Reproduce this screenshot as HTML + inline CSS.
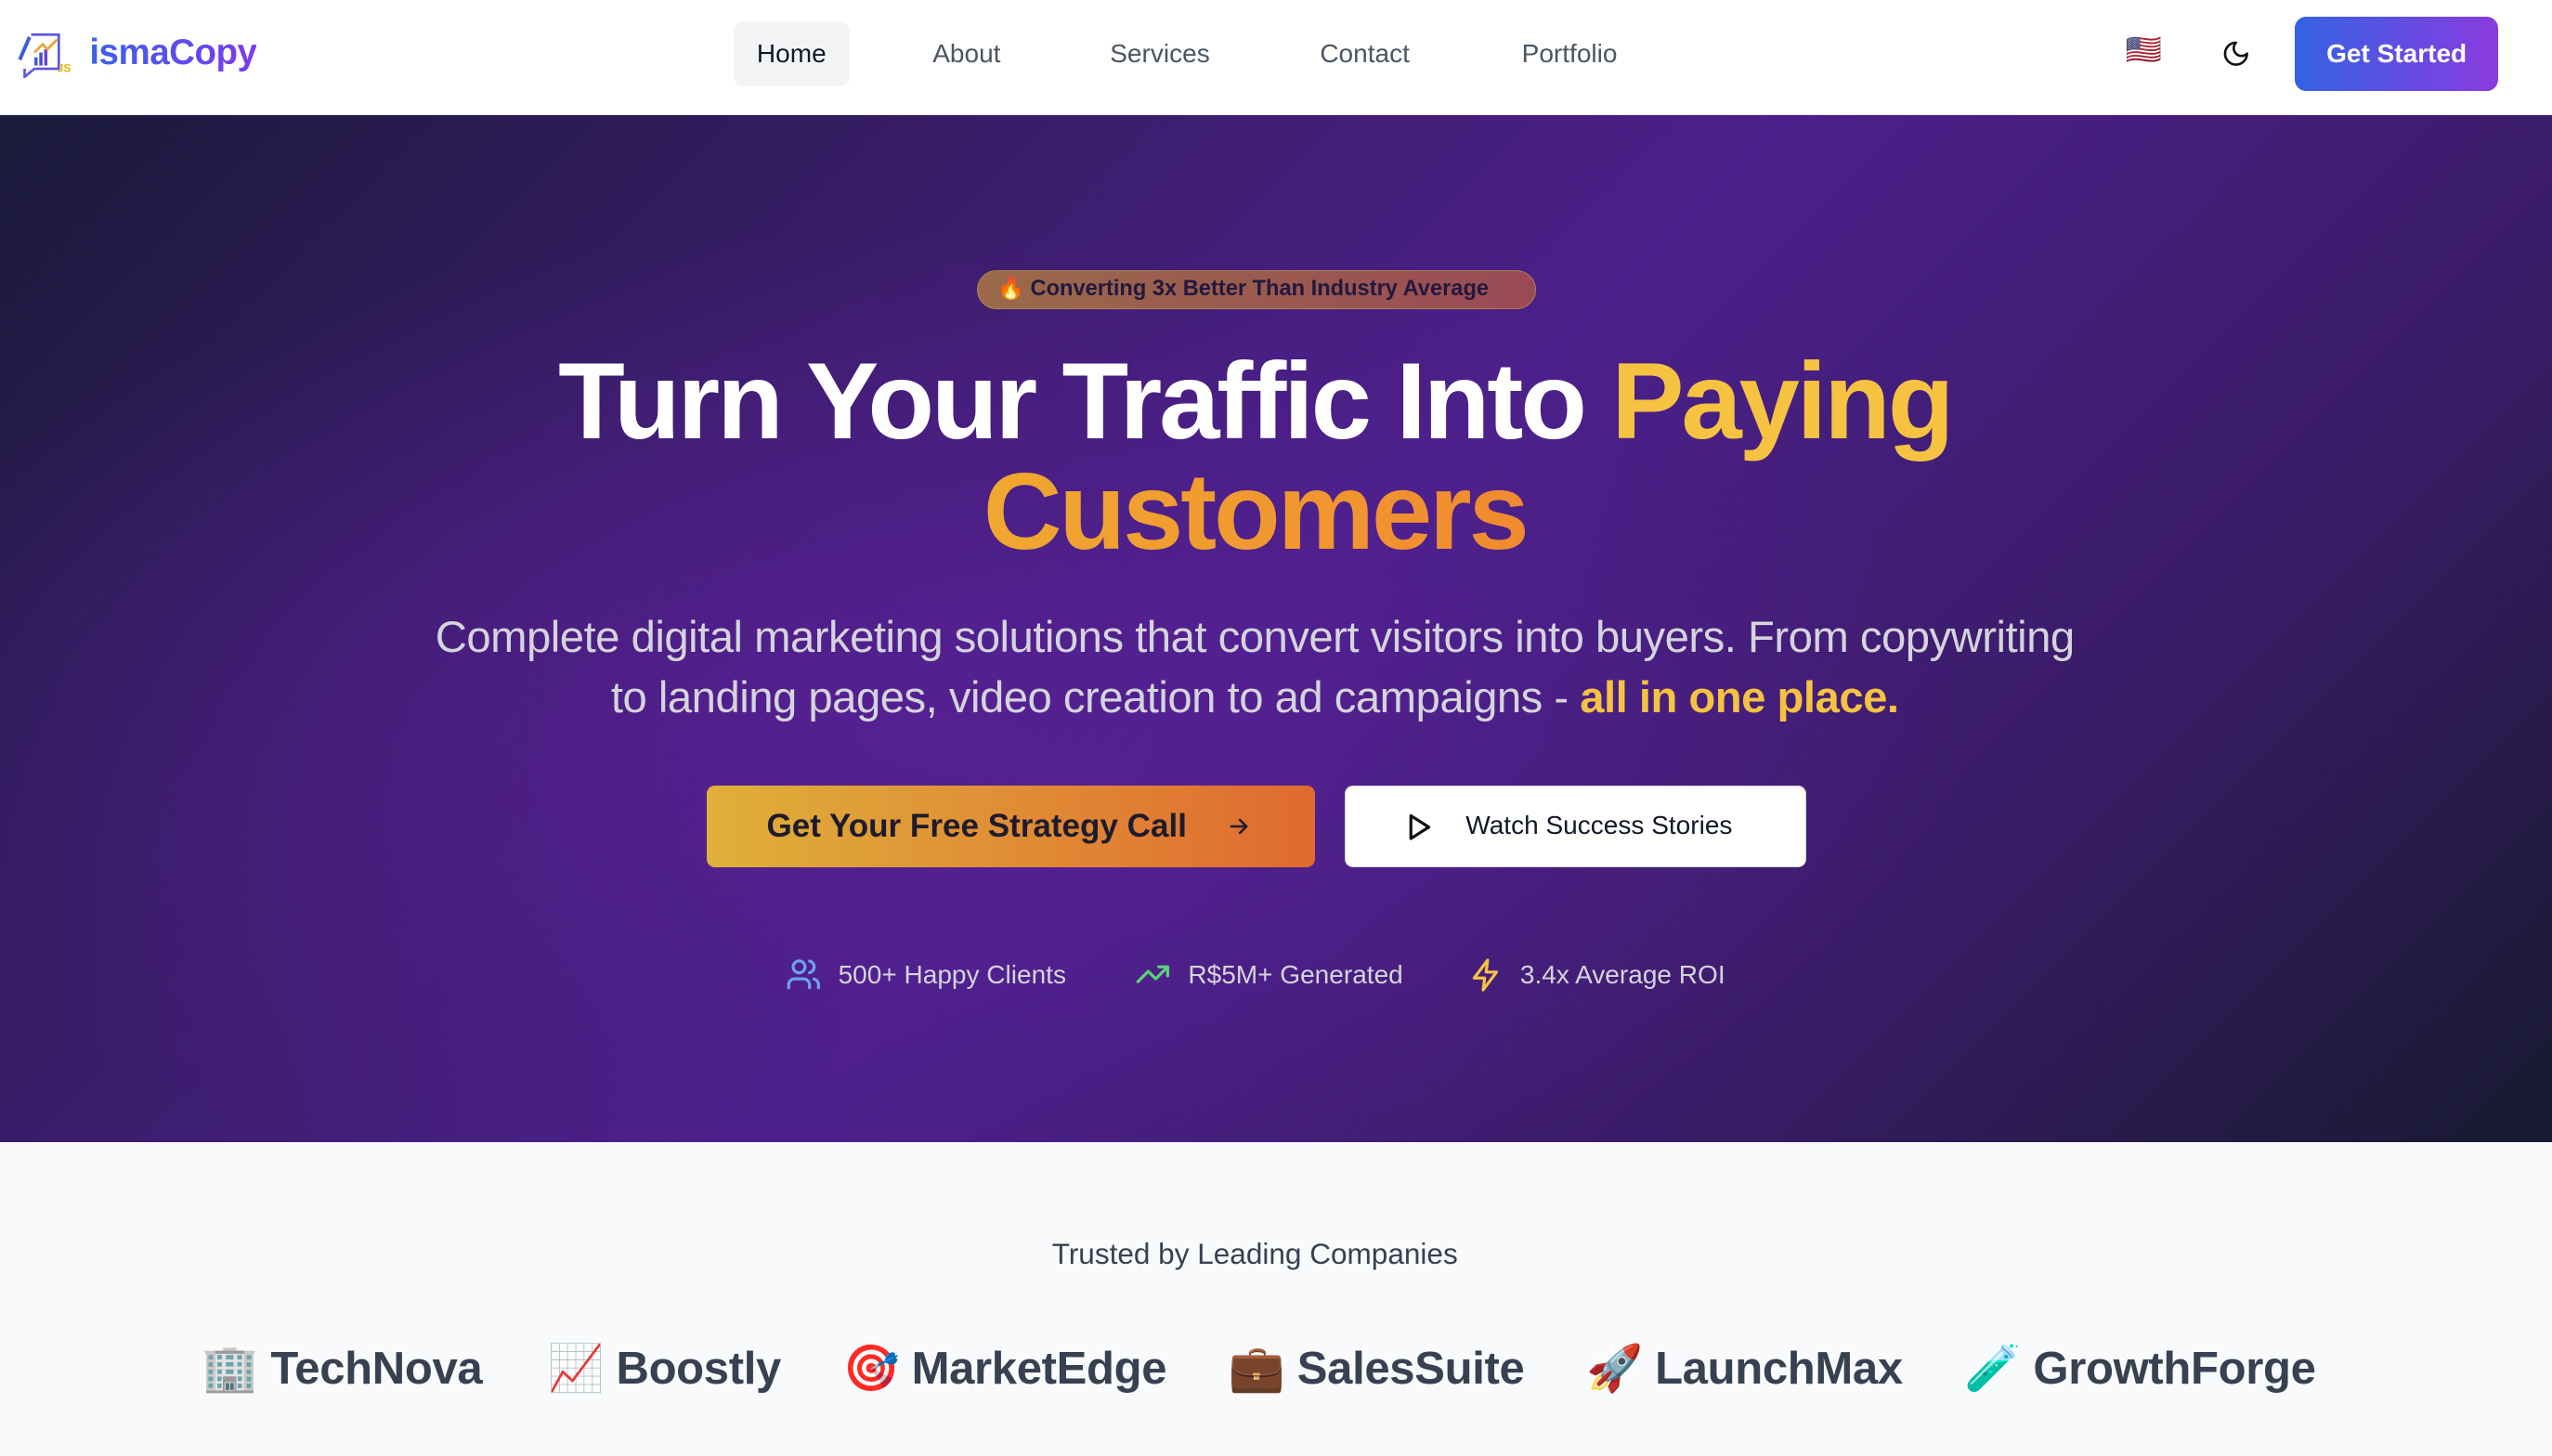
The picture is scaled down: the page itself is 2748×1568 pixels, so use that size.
<!DOCTYPE html>
<html><head><meta charset="utf-8">
<style>
*{margin:0;padding:0;box-sizing:border-box}
html,body{width:2748px;height:1568px;overflow:hidden}
body{font-family:"Liberation Sans","DejaVu Sans",sans-serif;background:#f8fafc}
#w{width:1568px;height:895px;position:relative;zoom:1.75255}
.nav{position:absolute;left:0;top:0;width:1568px;height:71px;background:#fff;border-bottom:1px solid #e5e7eb}
.a{position:absolute;white-space:nowrap}
.link{font-size:16px;color:#4b5563;top:24px}
.hero{position:absolute;left:0;top:71px;width:1568px;height:631px;
background:radial-gradient(ellipse 60% 70% at 35% 60%,rgba(88,32,150,.85),rgba(88,32,150,0) 70%),
linear-gradient(135deg,#1a1a3a 0%,#3b1d6b 30%,#4b208a 50%,#3a1c68 75%,#171a30 100%)}
.c{left:0;width:1542px;text-align:center}
</style></head><body><div id="w">
<div class="nav">
 <svg class="a" style="left:9px;top:18px" width="38" height="30" viewBox="0 0 38 30">
  <path d="M8 4 L2 18 L4 19 L10 5Z" fill="#3b5bdb"/>
  <path d="M10 3 H27 V24 H12 L6 29 V24" fill="none" stroke="#5a55e0" stroke-width="1.5"/>
  <rect x="12" y="17" width="2" height="5" fill="#3b5bdb"/><rect x="15" y="14" width="2" height="8" fill="#5548d8"/><rect x="18" y="12" width="2" height="10" fill="#6a44d8"/>
  <path d="M12 14 L17 9 L20 12 L26 6" fill="none" stroke="#e8a53a" stroke-width="1.6"/>
  <text x="26" y="26" font-size="7" font-weight="bold" fill="#eab308">JS</text>
 </svg>
 <div class="a" style="left:55px;top:20px;font-size:22px;font-weight:bold;letter-spacing:-.3px;background:linear-gradient(90deg,#3b63e6,#7c3aed);-webkit-background-clip:text;color:transparent">ismaCopy</div>
 <div class="a" style="left:451px;top:13px;width:71px;height:40px;background:#f3f4f6;border-radius:6px"></div>
 <div class="a link" style="left:465px;color:#111827">Home</div>
 <div class="a link" style="left:573px">About</div>
 <div class="a link" style="left:682px">Services</div>
 <div class="a link" style="left:811px">Contact</div>
 <div class="a link" style="left:935px">Portfolio</div>
 <div class="a" style="left:1306px;top:20px;font-size:18px">🇺🇸</div>
 <svg class="a" style="left:1365px;top:24px" width="18" height="18" viewBox="0 0 24 24"><path d="M12 3a6 6 0 0 0 9 9 9 9 0 1 1-9-9Z" fill="none" stroke="#111" stroke-width="2" stroke-linecap="round" stroke-linejoin="round"/></svg>
 <div class="a" style="left:1410px;top:10px;width:125px;height:46px;border-radius:7px;background:linear-gradient(90deg,#3362e3,#8a3be0);color:#fff;font-size:16px;font-weight:bold;text-align:center;line-height:46px">Get Started</div>
</div>
<div class="hero"></div>
<div class="a" style="left:600px;top:166px;width:344px;height:24px;border-radius:12px;background:linear-gradient(90deg,#9a6a4a,#9a4a55);border:1px solid #b08050;font-size:13.5px;font-weight:bold;color:#22183f;line-height:22px;padding-left:12px">🔥 Converting 3x Better Than Industry Average</div>
<div class="a c" style="top:212px;font-size:67px;font-weight:bold;color:#fff;letter-spacing:-1.8px;line-height:68px">Turn Your Traffic Into <span style="color:#f5c242">Paying</span><br><span style="background:linear-gradient(90deg,#f0a830,#f08a30);-webkit-background-clip:text;color:transparent">Customers</span></div>
<div class="a c" style="top:374px;font-size:27px;color:#d4d4dc;line-height:37px;letter-spacing:-.3px">Complete digital marketing solutions that convert visitors into buyers. From copywriting<br>to landing pages, video creation to ad campaigns - <b style="color:#f5c242">all in one place.</b></div>
<div class="a" style="left:434px;top:483px;width:374px;height:50px;border-radius:5px;background:linear-gradient(90deg,#dfb03a,#e06a30);color:#1e1b2e;font-size:20px;font-weight:bold;line-height:50px;padding-left:37px">Get Your Free Strategy Call</div>
<svg class="a" style="left:753px;top:500px" width="16" height="16" viewBox="0 0 24 24" fill="none" stroke="#1e1b2e" stroke-width="2.2" stroke-linecap="round" stroke-linejoin="round"><path d="M5 12h14M13 6l6 6-6 6"/></svg>
<div class="a" style="left:826px;top:483px;width:284px;height:50px;border-radius:5px;background:#fff;border:1px solid #d1d5db;color:#111827;font-size:16px;line-height:48px;padding-left:74px">Watch Success Stories</div>
<svg class="a" style="left:864px;top:499px" width="16" height="18" viewBox="0 0 16 18"><path d="M3 2 L14 9 L3 16Z" fill="none" stroke="#111" stroke-width="1.8" stroke-linejoin="round"/></svg>
<svg class="a" style="left:483px;top:588px" width="22" height="22" viewBox="0 0 24 24" fill="none" stroke="#6ea0f5" stroke-width="2" stroke-linecap="round"><circle cx="9" cy="7" r="4"/><path d="M2 21v-2a4 4 0 0 1 4-4h6a4 4 0 0 1 4 4v2M16 3.1a4 4 0 0 1 0 7.8M22 21v-2a4 4 0 0 0-3-3.9"/></svg>
<div class="a" style="left:515px;top:590px;font-size:16px;color:#d4d4dc">500+ Happy Clients</div>
<svg class="a" style="left:697px;top:588px" width="22" height="22" viewBox="0 0 24 24" fill="none" stroke="#5ad27a" stroke-width="2" stroke-linecap="round" stroke-linejoin="round"><path d="M2 17l7-7 5 5 8-8M16 7h6v6"/></svg>
<div class="a" style="left:730px;top:590px;font-size:16px;color:#d4d4dc">R$5M+ Generated</div>
<svg class="a" style="left:902px;top:587px" width="22" height="24" viewBox="0 0 24 24" fill="none" stroke="#f5c242" stroke-width="2" stroke-linejoin="round"><path d="M13 2L4 14h7l-1 8 9-12h-7z"/></svg>
<div class="a" style="left:934px;top:590px;font-size:16px;color:#d4d4dc">3.4x Average ROI</div>
<div class="a c" style="top:760px;font-size:18px;color:#374151">Trusted by Leading Companies</div>
<div class="a" style="left:124px;top:824px;font-size:28px;font-weight:bold;color:#374151;letter-spacing:-.2px">
<span>🏢 TechNova</span><span style="margin-left:40px">📈 Boostly</span><span style="margin-left:38px">🎯 MarketEdge</span><span style="margin-left:38px">💼 SalesSuite</span><span style="margin-left:38px">🚀 LaunchMax</span><span style="margin-left:38px">🧪 GrowthForge</span></div>
</div></body></html>
